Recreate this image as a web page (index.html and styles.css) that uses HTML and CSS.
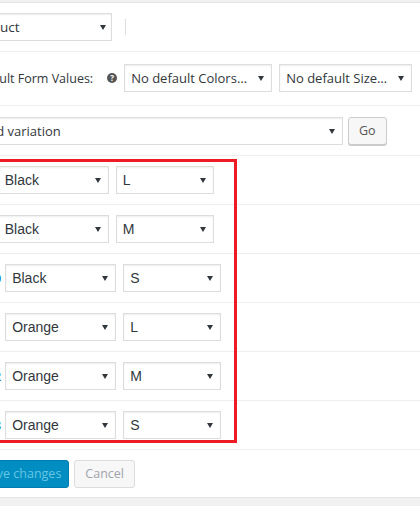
FILE: index.html
```html
<!DOCTYPE html>
<html lang="en">
<head>
<meta charset="utf-8">
<title>Variations</title>
<link rel="stylesheet" href="styles.css">
</head>
<body>
<div class="panel">
  <div class="bar bar-type">
    <div class="sel sel-type"><span class="sel-text">Variable product</span><span class="caret"></span></div>
    <span class="vsep"></span>
  </div>
  <div class="bar bar-defaults">
    <span class="label">Default Form Values:</span>
    <span class="help">?</span>
    <div class="sel sel-colors"><span class="sel-text">No default Colors…</span><span class="caret"></span></div>
    <div class="sel sel-sizes"><span class="sel-text">No default Size…</span><span class="caret"></span></div>
  </div>
  <div class="bar bar-add">
    <div class="sel sel-add"><span class="sel-text">Add variation</span><span class="caret"></span></div>
    <button class="btn btn-go" type="button">Go</button>
  </div>
  <div class="vrows">
    <div class="vrow">
      <strong class="vid">#995</strong>
      <div class="sel sel-color"><span class="sel-text">Black</span><span class="caret"></span></div>
      <div class="sel sel-size"><span class="sel-text">L</span><span class="caret"></span></div>
    </div>
    <div class="vrow">
      <strong class="vid">#996</strong>
      <div class="sel sel-color"><span class="sel-text">Black</span><span class="caret"></span></div>
      <div class="sel sel-size"><span class="sel-text">M</span><span class="caret"></span></div>
    </div>
    <div class="vrow">
      <strong class="vid">#1000</strong>
      <div class="sel sel-color"><span class="sel-text">Black</span><span class="caret"></span></div>
      <div class="sel sel-size"><span class="sel-text">S</span><span class="caret"></span></div>
    </div>
    <div class="vrow">
      <strong class="vid">#1001</strong>
      <div class="sel sel-color"><span class="sel-text">Orange</span><span class="caret"></span></div>
      <div class="sel sel-size"><span class="sel-text">L</span><span class="caret"></span></div>
    </div>
    <div class="vrow">
      <strong class="vid">#1002</strong>
      <div class="sel sel-color"><span class="sel-text">Orange</span><span class="caret"></span></div>
      <div class="sel sel-size"><span class="sel-text">M</span><span class="caret"></span></div>
    </div>
    <div class="vrow">
      <strong class="vid">#1003</strong>
      <div class="sel sel-color"><span class="sel-text">Orange</span><span class="caret"></span></div>
      <div class="sel sel-size"><span class="sel-text">S</span><span class="caret"></span></div>
    </div>
    <div class="highlight"></div>
  </div>
  <div class="bar bar-footer">
    <button class="btn btn-primary" type="button" disabled>Save changes</button>
    <button class="btn btn-cancel" type="button" disabled>Cancel</button>
  </div>
</div>
</body>
</html>
```
FILE: styles.css
```css
* { box-sizing: border-box; }
html, body { margin: 0; padding: 0; }
body {
  width: 420px;
  height: 506px;
  overflow: hidden;
  background: #f1f1f1;
  font-family: "Open Sans", "DejaVu Sans", sans-serif;
  color: #32373c;
}
.panel {
  margin-top: 2px;
  background: #fff;
  border-top: 1px solid #e5e5e5;
  border-bottom: 1px solid #e5e5e5;
}
.bar {
  display: flex;
  align-items: center;
  border-bottom: 1px solid #eee;
}
.bar-type { padding: 10px 0; }
.bar-defaults { padding: 12px 0 13px; }
.bar-add { padding: 11px 0 10px; }
.bar-footer { padding: 10px 0 9px; border-bottom: 0; }

.sel {
  flex: none;
  display: flex;
  align-items: center;
  height: 28px;
  padding: 0 7px 0 6px;
  border: 1px solid #ddd;
  background: #fff;
  box-shadow: inset 0 1px 2px rgba(0, 0, 0, 0.07);
  font-size: 13px;
  color: #32373c;
  white-space: nowrap;
}
.caret {
  margin-left: auto;
  width: 0;
  height: 0;
  border-left: 3px solid transparent;
  border-right: 3px solid transparent;
  border-top: 5px solid #32373c;
}
.sel-type { margin-left: -92px; width: 204px; padding-right: 5px; font-size: 13.5px; }
.vsep {
  width: 1px;
  height: 16px;
  margin-left: 13px;
  background: #ddd;
}
.label {
  margin-left: -28px;
  font-size: 12.5px;
  white-space: nowrap;
}
.help {
  flex: none;
  margin-left: 14px;
  width: 10px;
  height: 10px;
  border-radius: 50%;
  background: #555;
  color: #fff;
  font-size: 8px;
  font-weight: 700;
  line-height: 10px;
  text-align: center;
}
.sel-colors { margin-left: 7px; width: 148px; }
.sel-sizes { margin-left: 7px; width: 133px; }
.sel-add { margin-left: -27px; width: 370px; }

.btn {
  flex: none;
  height: 28px;
  padding: 0 10px;
  border: 1px solid #ccc;
  border-radius: 3px;
  background: #f7f7f7;
  box-shadow: 0 1px 0 #ccc;
  color: #555;
  font-family: "Open Sans", "DejaVu Sans", sans-serif;
  font-size: 12.5px;
  line-height: 26px;
  white-space: nowrap;
}
.btn-go { margin-left: 5px; }
.btn-primary {
  margin-left: -25px;
  padding-left: 7px;
  padding-right: 7px;
  background: #008ec2;
  border-color: #007cb2;
  color: #66c6e4;
  box-shadow: none;
}
.btn-cancel {
  margin-left: 5px;
  background: #f7f7f7;
  border-color: #ddd;
  color: #a0a5aa;
  box-shadow: none;
}

.vrows { position: relative; }
.vrow {
  display: flex;
  align-items: center;
  padding: 10px 0;
  border-bottom: 1px solid #eee;
}
.vid {
  flex: none;
  margin-left: -37px;
  margin-right: 4px;
  font-size: 13px;
  font-weight: 600;
  color: #0073aa;
}
.vrow .sel {
  font-family: "Liberation Sans", Arial, sans-serif;
  font-size: 14px;
}
.sel-color { width: 111px; }
.sel-size { width: 98px; margin-left: 7px; }

.highlight {
  position: absolute;
  top: 3px;
  bottom: 7px;
  left: -10px;
  width: 247px;
  border: 3px solid #ed1c24;
  pointer-events: none;
}
```
